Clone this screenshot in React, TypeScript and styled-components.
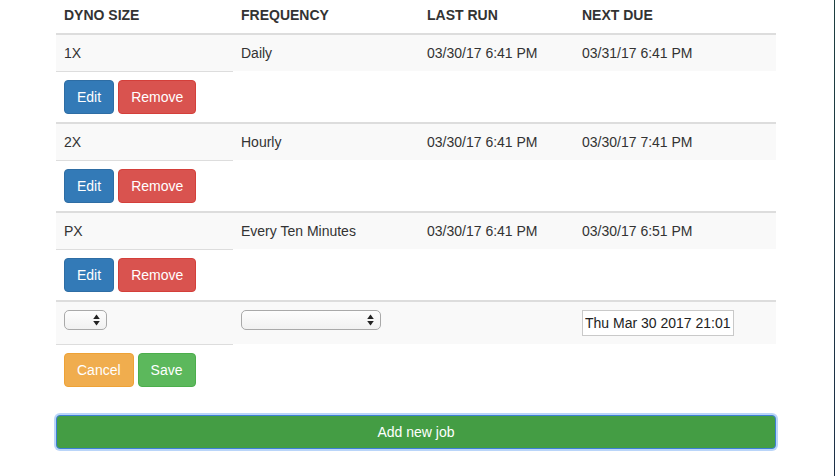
import React from "react"
import styled, { createGlobalStyle } from "styled-components"

const GlobalStyle = createGlobalStyle`
  html, body {
    margin: 0;
    padding: 0;
    background: #fff;
  }
  body {
    font-family: "Liberation Sans", Arial, Helvetica, sans-serif;
    font-size: 14px;
    line-height: 20px;
    color: #333;
  }
  #root {
    display: flex;
    min-height: 100vh;
  }
`

interface Job {
  size: string
  frequency: string
  lastRun: string
  nextDue: string
}

const jobs: Job[] = [
  { size: "1X", frequency: "Daily", lastRun: "03/30/17 6:41 PM", nextDue: "03/31/17 6:41 PM" },
  { size: "2X", frequency: "Hourly", lastRun: "03/30/17 6:41 PM", nextDue: "03/30/17 7:41 PM" },
  { size: "PX", frequency: "Every Ten Minutes", lastRun: "03/30/17 6:41 PM", nextDue: "03/30/17 6:51 PM" },
]

const columns = "177px 186px 155px 202px"

const App: React.FC = () => {
  return (
    <>
      <GlobalStyle/>
      <Page>
        <JobsTable>
          <HeaderRow>
            <HeadCell>Dyno Size</HeadCell>
            <HeadCell>Frequency</HeadCell>
            <HeadCell>Last Run</HeadCell>
            <HeadCell>Next Due</HeadCell>
          </HeaderRow>

          {jobs.map((job) => (
            <JobGroup key={job.size}>
              <MainRow>
                <Cell>{job.size}</Cell>
                <Cell>{job.frequency}</Cell>
                <Cell>{job.lastRun}</Cell>
                <Cell>{job.nextDue}</Cell>
              </MainRow>
              <ActionRow>
                <Button variant="primary">Edit</Button>
                <Button variant="danger">Remove</Button>
              </ActionRow>
            </JobGroup>
          ))}

          {/* new job form row */}
          <JobGroup>
            <MainRow>
              <Cell>
                <FakeSelect width={43}><SelectArrows/></FakeSelect>
              </Cell>
              <Cell>
                <FakeSelect width={140}><SelectArrows/></FakeSelect>
              </Cell>
              <Cell/>
              <Cell>
                <DateInput type="text" defaultValue="Thu Mar 30 2017 21:01"/>
              </Cell>
            </MainRow>
            <ActionRow>
              <Button variant="warning">Cancel</Button>
              <Button variant="success">Save</Button>
            </ActionRow>
          </JobGroup>
        </JobsTable>

        <AddButton>Add new job</AddButton>
      </Page>
      <WindowEdge/>
    </>
  )
}

const SelectArrows: React.FC = () => (
  <svg width="7" height="12" viewBox="0 0 7 12">
    <path d="M3.5 0.5 L6.8 5 L0.2 5 Z" fill="#222"/>
    <path d="M3.5 11.5 L6.8 7 L0.2 7 Z" fill="#222"/>
  </svg>
)

const Page = styled.div`
  flex: 1;
  padding-left: 56px;
`

const WindowEdge = styled.div`
  width: 1px;
  background: linear-gradient(#1d3f40, #1c2f47);
`

const JobsTable = styled.div`
  width: 720px;
`

const HeaderRow = styled.div`
  display: grid;
  grid-template-columns: ${columns};
  border-bottom: 2px solid #ddd;
`

const HeadCell = styled.div`
  padding: 5px 8px 8px;
  font-weight: bold;
  text-transform: uppercase;
  color: #333;
`

const JobGroup = styled.div`
  & + & {
    border-top: 2px solid #ddd;
  }
`

const MainRow = styled.div`
  display: grid;
  grid-template-columns: ${columns};
  background: #f9f9f9;
`

const Cell = styled.div`
  padding: 8px;
  min-height: 20px;
`

const ActionRow = styled.div`
  width: 177px;
  box-sizing: border-box;
  border-top: 1px solid #ddd;
  padding: 8px;
  display: flex;
  gap: 4px;
`

const palette = {
  primary: { bg: "#337ab7", border: "#2e6da4" },
  danger: { bg: "#d9534f", border: "#d43f3a" },
  warning: { bg: "#f0ad4e", border: "#eea236" },
  success: { bg: "#5cb85c", border: "#4cae4c" },
}

const Button = styled.button<{ variant: keyof typeof palette }>`
  font-family: inherit;
  font-size: 14px;
  line-height: 20px;
  padding: 6px 12px;
  border-radius: 4px;
  color: #fff;
  background: ${(p) => palette[p.variant].bg};
  border: 1px solid ${(p) => palette[p.variant].border};
  cursor: pointer;
`

const FakeSelect = styled.div<{ width: number }>`
  width: ${(p) => p.width}px;
  height: 20px;
  box-sizing: border-box;
  border: 1px solid #a9a9a9;
  border-radius: 5px;
  background: linear-gradient(#fdfdfd, #f1f1f1);
  display: flex;
  align-items: center;
  justify-content: flex-end;
  padding-right: 6px;
`

const DateInput = styled.input`
  display: block;
  width: 152px;
  height: 26px;
  box-sizing: border-box;
  margin: 0;
  padding: 1px 2px;
  border: 1px solid #c9c9c9;
  border-radius: 0;
  font-family: "Liberation Sans", Arial, sans-serif;
  font-size: 14px;
  color: #222;
  background: #fff;
`

const AddButton = styled.button`
  display: block;
  width: 720px;
  height: 34px;
  margin-top: 20px;
  font-family: inherit;
  font-size: 14px;
  line-height: 20px;
  color: #fff;
  background: #449d44;
  border: 1px solid #3d7fd4;
  border-radius: 4px;
  box-shadow: 0 0 0 2px rgba(140, 185, 245, 0.6);
  cursor: pointer;
`

export default App
